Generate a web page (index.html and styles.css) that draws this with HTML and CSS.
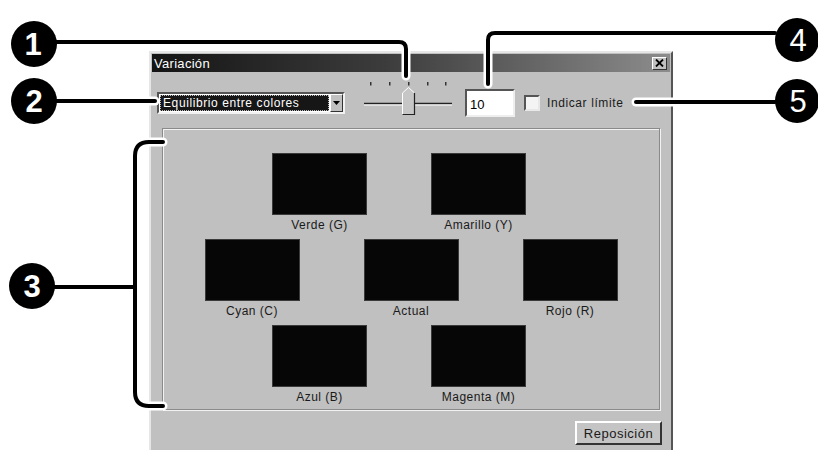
FILE: index.html
```html
<!DOCTYPE html>
<html lang="es">
<head>
    <meta charset="UTF-8">
    <title>Variación</title>
    <link rel="stylesheet" href="styles.css">
</head>
<body>

    <div class="dialog">
        <div class="titlebar">
            <span class="title">Variación</span>
            <span class="close">
                <svg width="9" height="8" viewBox="0 0 9 8"><path d="M1 0.5 L8 7.5 M8 0.5 L1 7.5" stroke="#000" stroke-width="1.8"/></svg>
            </span>
        </div>

        <div class="content">
            <div class="toolbar">
                <div class="combo">
                    <span class="combo-text"><span class="combo-focus">Equilibrio entre colores</span></span>
                    <span class="combo-btn">
                        <svg width="7" height="4" viewBox="0 0 7 4"><path d="M0 0 H7 L3.5 4 Z" fill="#000"/></svg>
                    </span>
                </div>

                <svg class="slider" width="96" height="36" viewBox="0 0 96 36">
                    <g fill="#333">
                        <rect x="10" y="0" width="1.5" height="3.5"/>
                        <rect x="29" y="0" width="1.5" height="3.5"/>
                        <rect x="48" y="0" width="1.5" height="3.5"/>
                        <rect x="67" y="0" width="1.5" height="3.5"/>
                        <rect x="85" y="0" width="1.5" height="3.5"/>
                    </g>
                    <line x1="4" y1="21.5" x2="92" y2="21.5" stroke="#222" stroke-width="1.5"/>
                    <line x1="4" y1="23" x2="92" y2="23" stroke="#fff" stroke-width="1"/>
                    <polygon points="42,33 42,11 48.5,5 55,11 55,33" fill="#c6c6c6"/>
                    <polyline points="42.5,32.5 42.5,11 48.5,5.5 54,10.5" fill="none" stroke="#fff" stroke-width="1"/>
                    <polyline points="54.5,11 54.5,32.5 42.5,32.5" fill="none" stroke="#222" stroke-width="1.2"/>
                </svg>

                <div class="field">10</div>

                <label class="check"><span class="box"></span>Indicar límite</label>
            </div>

            <div class="panel">
                <div class="row shift">
                    <div class="cell"><div class="swatch"></div><span class="caption">Verde (G)</span></div>
                    <div class="cell"><div class="swatch"></div><span class="caption">Amarillo (Y)</span></div>
                </div>
                <div class="row">
                    <div class="cell"><div class="swatch"></div><span class="caption">Cyan (C)</span></div>
                    <div class="cell"><div class="swatch"></div><span class="caption">Actual</span></div>
                    <div class="cell"><div class="swatch"></div><span class="caption">Rojo (R)</span></div>
                </div>
                <div class="row shift">
                    <div class="cell"><div class="swatch"></div><span class="caption">Azul (B)</span></div>
                    <div class="cell"><div class="swatch"></div><span class="caption">Magenta (M)</span></div>
                </div>
            </div>

            <div class="actions">
                <button type="button">Reposición</button>
            </div>
        </div>
    </div>

    <!-- callouts drawn over the screenshot -->
    <svg class="callouts" width="818" height="450" viewBox="0 0 818 450">
        <g fill="none" stroke-linecap="round" stroke-linejoin="round">
            <g stroke="#fff" stroke-width="9">
                <path d="M56 42 H399 Q406 42 406 49 V76"/>
                <path d="M56 101 H155"/>
                <path d="M54 287 H135"/>
                <path d="M163 142 H149 Q135 142 135 156 V392 Q135 406 149 406 H163"/>
                <path d="M775 33 H495 Q488 33 488 40 V84"/>
                <path d="M636 102 H775"/>
            </g>
            <g stroke="#000" stroke-width="4">
                <path d="M56 42 H399 Q406 42 406 49 V76"/>
                <path d="M56 101 H155"/>
                <path d="M54 287 H135"/>
                <path d="M163 142 H149 Q135 142 135 156 V392 Q135 406 149 406 H163"/>
                <path d="M775 33 H495 Q488 33 488 40 V84"/>
                <path d="M636 102 H775"/>
            </g>
        </g>
        <g fill="#000">
            <circle cx="34" cy="44" r="23"/>
            <circle cx="34" cy="101" r="23"/>
            <circle cx="32" cy="286" r="23"/>
            <circle cx="797" cy="40" r="22"/>
            <circle cx="797" cy="101" r="22"/>
        </g>
        <g class="num" fill="#fff" text-anchor="middle">
            <text x="33" y="55">1</text>
            <text x="34" y="112">2</text>
            <text x="32" y="297">3</text>
            <text x="798" y="51" class="thin">4</text>
            <text x="798" y="112" class="thin">5</text>
        </g>
    </svg>

</body>
</html>
```

FILE: styles.css
```css
body {
    margin: 0;
    width: 818px;
    height: 450px;
    overflow: hidden;
    position: relative;
    background: #fff;
    font-family: "Liberation Sans", Arial, sans-serif;
    font-size: 12px;
    color: #1a1a1a;
}
.dialog {
    margin: 51px 0 0 149px;
    width: 524px;
    height: 420px;
    box-sizing: border-box;
    background: #c0c0c0;
    border: 2px solid;
    border-color: #e6e6e6 #555 #555 #e6e6e6;
}
.titlebar {
    margin: 1px 1px 0;
    height: 18px;
    display: flex;
    align-items: center;
    justify-content: space-between;
    padding: 0 3px 0 2px;
    background: linear-gradient(to right, #141414, #3c3c3c 45%, #8c8c8c);
}
.title {
    color: #fff;
    font-size: 13px;
    letter-spacing: 0.3px;
}
.close {
    width: 15px;
    height: 13px;
    box-sizing: border-box;
    display: flex;
    align-items: center;
    justify-content: center;
    background: #c0c0c0;
    border: 1px solid;
    border-color: #fff #333 #333 #fff;
}
.content {
    padding: 16px 11px 0 6px;
}
.toolbar {
    height: 30px;
    display: flex;
    align-items: center;
}
.combo {
    width: 188px;
    height: 22px;
    box-sizing: border-box;
    display: flex;
    margin-right: 15px;
    border: 2px solid;
    border-color: #555 #f2f2f2 #f2f2f2 #555;
    background: #fff;
}
.combo-text {
    flex: 1;
    padding: 1px;
    display: flex;
}
.combo-focus {
    flex: 1;
    background: #161616;
    color: #fff;
    outline: 1px dotted #bbb;
    outline-offset: -1px;
    line-height: 16px;
    padding-left: 3px;
    letter-spacing: 0.6px;
}
.combo-btn {
    width: 13px;
    box-sizing: border-box;
    display: flex;
    align-items: center;
    justify-content: center;
    background: #c0c0c0;
    border: 1px solid;
    border-color: #fff #333 #333 #fff;
}
.slider {
    align-self: flex-end;
    margin-right: 9px;
}
.field {
    width: 50px;
    height: 28px;
    box-sizing: border-box;
    margin-right: 9px;
    padding: 6px 0 0 3px;
    background: #fff;
    border: 2px solid;
    border-color: #555 #eee #eee #555;
    font-size: 13px;
    color: #000;
}
.check {
    display: flex;
    align-items: center;
    gap: 7px;
    letter-spacing: 0.6px;
}
.box {
    width: 16px;
    height: 16px;
    box-sizing: border-box;
    background: #f4f4f4;
    border: 2px solid;
    border-color: #555 #e8e8e8 #e8e8e8 #555;
}
.panel {
    margin-left: 5px;
    margin-top: 10px;
    height: 282px;
    box-sizing: border-box;
    padding-top: 24px;
    border: 1px solid #8a8a8a;
    box-shadow: 1px 1px 0 #f2f2f2, inset 1px 1px 0 #f2f2f2;
    display: flex;
    flex-direction: column;
    gap: 7px;
}
.row {
    display: flex;
    justify-content: center;
    gap: 64px;
}
.row.shift {
    padding-right: 24px;
}
.cell {
    width: 95px;
    display: flex;
    flex-direction: column;
    align-items: center;
}
.swatch {
    width: 95px;
    height: 62px;
    box-sizing: border-box;
    background: #060606;
    border: 1px solid #3a3a3a;
}
.caption {
    margin-top: 3px;
    line-height: 14px;
    white-space: nowrap;
    letter-spacing: 0.5px;
}
.actions {
    display: flex;
    justify-content: flex-end;
    margin: 11px -2px 0 0;
}
button {
    width: 87px;
    height: 24px;
    padding: 0;
    background: #c4c4c4;
    border: 2px solid;
    border-color: #fff #333 #333 #fff;
    font-family: "Liberation Sans", Arial, sans-serif;
    font-size: 13px;
    letter-spacing: 0.5px;
    color: #1a1a1a;
}
.callouts {
    position: absolute;
    left: 0;
    top: 0;
    pointer-events: none;
}
.num text {
    font-family: "Liberation Sans", Arial, sans-serif;
    font-size: 31px;
    font-weight: bold;
}
.num text.thin {
    font-weight: normal;
}
```
